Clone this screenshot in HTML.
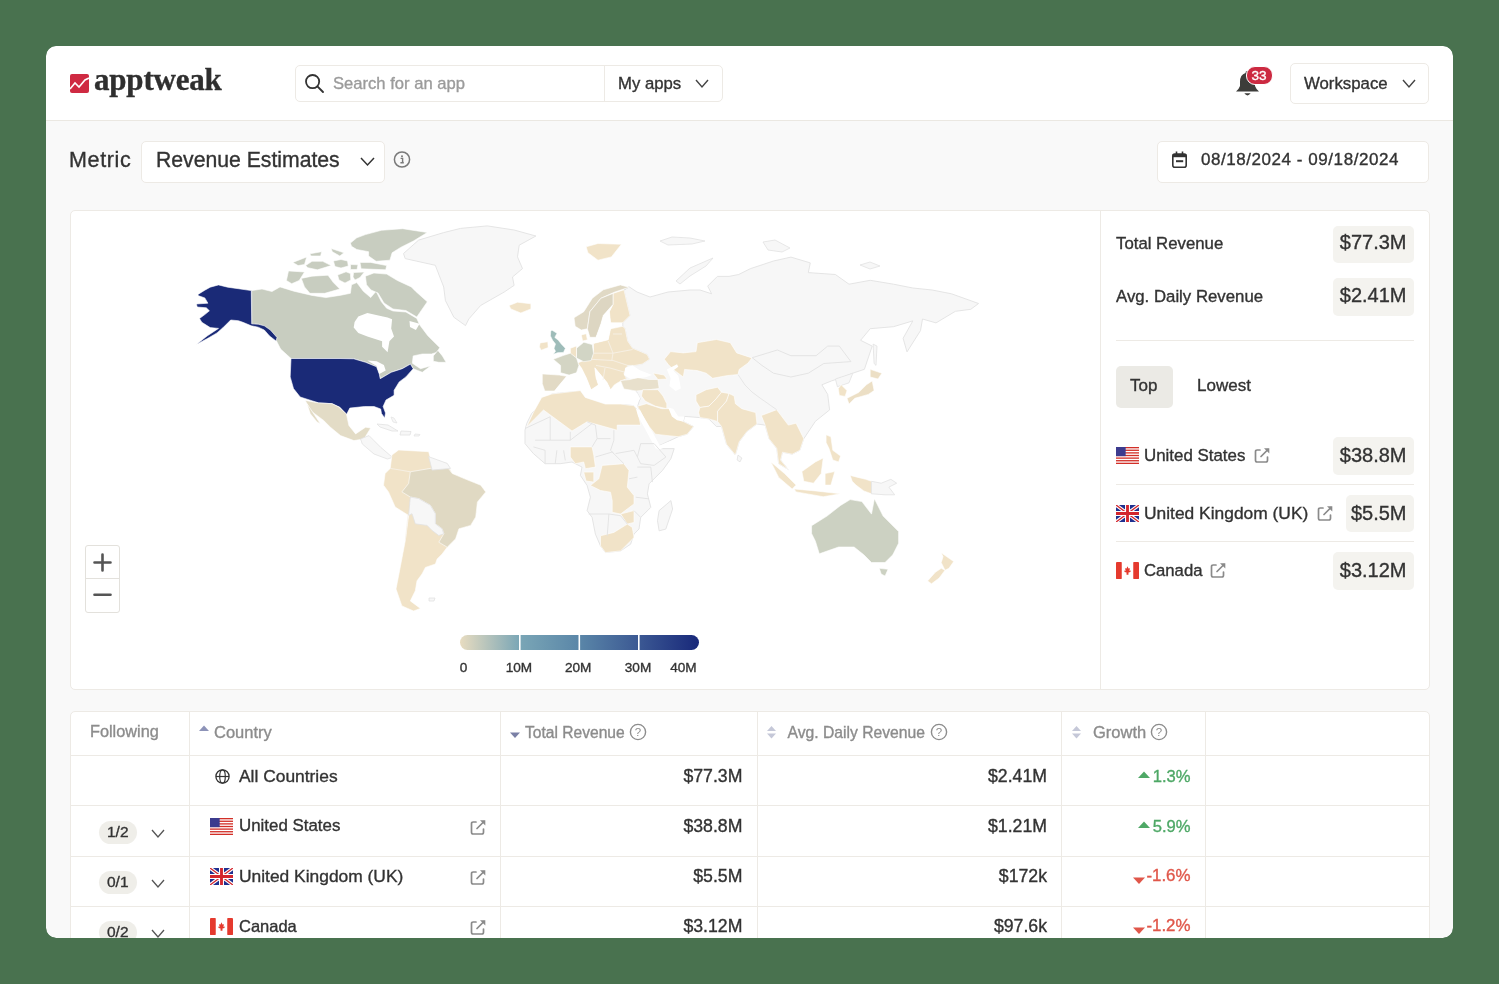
<!DOCTYPE html>
<html><head><meta charset="utf-8"><style>
html,body{margin:0;padding:0;-webkit-font-smoothing:antialiased;width:1499px;height:984px;overflow:hidden;background:#49724f;font-family:"Liberation Sans",sans-serif;}
#wrap{position:absolute;left:0;top:0;width:1499px;height:984px;}
#clip{position:absolute;left:46px;top:46px;width:1407px;height:892px;overflow:hidden;border-radius:10px;}
#inner{position:absolute;left:-46px;top:-46px;width:1499px;height:984px;will-change:transform;}
#inner div{-webkit-text-stroke:0.35px currentColor;}
</style></head><body><div id="wrap"><div id="clip"><div id="inner">
<div style="position:absolute;left:46px;top:46px;width:1407px;height:892px;box-sizing:border-box;background:#f9f9f9;border-radius:10px;"></div>
<div style="position:absolute;left:46px;top:46px;width:1407px;height:75px;box-sizing:border-box;background:#fff;border-bottom:1px solid #ebe8e2;border-radius:10px 10px 0 0;"></div>
<svg style="position:absolute;left:70px;top:74px" width="19" height="19" viewBox="0 0 19 19"><rect width="19" height="19" rx="2" fill="#cf2a42"/><polyline points="0,15 5,9 9,13 15,6 19,4" fill="none" stroke="#fff" stroke-width="1.6"/></svg>
<div style="position:absolute;left:94px;top:62.03px;font-size:31px;line-height:35.65px;color:#2f2f2f;font-weight:bold;letter-spacing:-0.2px;white-space:nowrap;font-family:'Liberation Serif',serif;">apptweak</div>
<div style="position:absolute;left:295px;top:65px;width:428px;height:37px;box-sizing:border-box;background:#fff;border:1px solid #edeae5;border-radius:5px;"></div>
<div style="position:absolute;left:604px;top:66px;width:1px;height:35px;box-sizing:border-box;background:#edeae5;"></div>
<svg style="position:absolute;left:304px;top:73px" width="21" height="21" viewBox="0 0 21 21"><circle cx="8.6" cy="8.6" r="6.6" fill="none" stroke="#333" stroke-width="1.8"/><path d="M13.4 13.4 L19 19" stroke="#333" stroke-width="1.9" stroke-linecap="round"/></svg>
<div style="position:absolute;left:333px;top:73.70px;font-size:16.6px;line-height:19.09px;color:#9b9b9b;font-weight:normal;letter-spacing:0px;white-space:nowrap;">Search for an app</div>
<div style="position:absolute;left:618px;top:73.61px;font-size:16.7px;line-height:19.20px;color:#333;font-weight:normal;letter-spacing:0px;white-space:nowrap;">My apps</div>
<svg style="position:absolute;left:694px;top:78px" width="16" height="11"><polyline points="2,2 8.0,9 14,2" fill="none" stroke="#444" stroke-width="1.4"/></svg>
<svg style="position:absolute;left:1235px;top:69px" width="26" height="29" viewBox="0 0 26 29"><path d="M12 2 Q13.5 2 13.5 4 Q20 5.5 20 13 L20 17 Q21 20 24 22.5 L1 22.5 Q4 20 5 17 L5 13 Q5 5.5 10.5 4 Q10.5 2 12 2 Z" fill="#3d3d3a"/><path d="M9.3 24.3 Q12.5 28.5 15.7 24.3 Z" fill="#3d3d3a"/></svg>
<div style="position:absolute;left:1246px;top:66px;width:27px;height:19px;box-sizing:border-box;background:#cc2a41;border-radius:9px;border:1.5px solid #fff;"></div>
<div style="position:absolute;left:1251.5px;top:68.17px;font-size:13.6px;line-height:15.64px;color:#fff;font-weight:normal;letter-spacing:0px;white-space:nowrap;">33</div>
<div style="position:absolute;left:1290px;top:63px;width:139px;height:41px;box-sizing:border-box;background:#fff;border:1px solid #edeae5;border-radius:5px;"></div>
<div style="position:absolute;left:1304px;top:73.52px;font-size:16.8px;line-height:19.32px;color:#333;font-weight:normal;letter-spacing:0px;white-space:nowrap;">Workspace</div>
<svg style="position:absolute;left:1401px;top:78px" width="16" height="11"><polyline points="2,2 8.0,9 14,2" fill="none" stroke="#444" stroke-width="1.4"/></svg>
<div style="position:absolute;left:69px;top:147.79px;font-size:21.5px;line-height:24.72px;color:#333;font-weight:normal;letter-spacing:0.65px;white-space:nowrap;">Metric</div>
<div style="position:absolute;left:141px;top:141px;width:244px;height:42px;box-sizing:border-box;background:#fff;border:1px solid #edeae5;border-radius:5px;"></div>
<div style="position:absolute;left:156px;top:148.06px;font-size:21.2px;line-height:24.38px;color:#333;font-weight:normal;letter-spacing:0px;white-space:nowrap;">Revenue Estimates</div>
<svg style="position:absolute;left:359px;top:156px" width="17" height="11"><polyline points="2,2 8.5,9 15,2" fill="none" stroke="#333" stroke-width="1.5"/></svg>
<svg style="position:absolute;left:393px;top:151px" width="18" height="18" viewBox="0 0 18 18"><circle cx="9" cy="8.5" r="7.6" fill="none" stroke="#7a7a7a" stroke-width="1.5"/><circle cx="9" cy="5.2" r="1" fill="#7a7a7a"/><path d="M7.6 7.4 H9.6 V11.5 H10.6 M7.4 11.8 H10.8" stroke="#7a7a7a" stroke-width="1.4" fill="none"/></svg>
<div style="position:absolute;left:1157px;top:141px;width:272px;height:42px;box-sizing:border-box;background:#fff;border:1px solid #edeae5;border-radius:5px;"></div>
<svg style="position:absolute;left:1171px;top:150px" width="17" height="19" viewBox="0 0 17 19"><rect x="1.8" y="4" width="13.4" height="13.2" rx="2" fill="none" stroke="#333" stroke-width="1.6"/><rect x="1.8" y="4" width="13.4" height="3.2" fill="#333"/><path d="M5.5 1.5 V5 M11.5 1.5 V5" stroke="#333" stroke-width="1.6"/><rect x="5" y="10.2" width="7.2" height="2" fill="#333"/></svg>
<div style="position:absolute;left:1201px;top:150.03px;font-size:17px;line-height:19.55px;color:#333;font-weight:normal;letter-spacing:0.55px;white-space:nowrap;">08/18/2024 - 09/18/2024</div>
<div style="position:absolute;left:70px;top:210px;width:1360px;height:480px;box-sizing:border-box;background:#fff;border:1px solid #edeae5;border-radius:5px;"></div>
<div style="position:absolute;left:1100px;top:211px;width:1px;height:478px;box-sizing:border-box;background:#edeae5;"></div>
<svg style="position:absolute;left:0;top:0" width="1499" height="984" viewBox="0 0 1499 984"><polygon points="403.5,253.5 418.6,240.1 443.7,232.6 460.5,228.4 487.3,225.9 514.1,230.0 535.9,236.0 519.2,245.2 517.5,256.9 522.5,268.6 512.5,277.0 514.1,285.4 504.1,292.1 480.6,305.5 468.9,318.9 465.5,325.6 453.8,317.2 445.4,300.5 443.7,287.0 435.3,265.3 405.2,258.6" fill="#f7f7f7" stroke="#e2e2e2" stroke-width="0.9" stroke-linejoin="round"/>
<polygon points="251.7,290.6 262.0,289.0 272.0,291.5 280.0,286.9 293.9,291.2 312.0,295.4 325.9,297.6 339.8,295.4 350.4,293.3 351.5,284.8 356.8,282.6 363.3,291.2 370.7,297.6 376.1,291.2 381.4,301.8 386.7,308.3 393.0,311.0 405.9,312.0 416.8,318.4 419.6,324.8 427.8,335.7 435.1,343.0 439.7,347.6 437.0,352.2 431.5,354.0 422.3,354.0 413.2,355.9 412.3,363.2 420.5,368.7 430.5,365.9 429.6,366.8 422.3,372.3 417.7,370.5 413.2,368.7 410.4,364.1 402.2,368.7 391.2,372.3 380.2,378.7 379.3,374.1 376.6,366.8 365.6,362.3 353.7,358.8 340.0,358.5 291.0,358.5 280.6,349.1 276.5,341.0 269.6,336.0 264.3,330.0 258.2,327.2 251.7,325.0" fill="#c8cdc0" stroke="#ffffff" stroke-width="0.6" stroke-linejoin="round"/>
<polygon points="354.6,322.0 358.3,316.5 367.4,312.9 378.4,315.6 387.6,317.4 392.1,319.3 391.2,328.4 394.0,336.6 389.4,341.2 387.6,352.2 382.1,346.7 382.1,341.2 367.4,336.6 358.3,333.0 353.7,327.5" fill="#ffffff"/>
<polygon points="409.5,321.1 419.6,323.8 415.9,330.0 410.0,327.0" fill="#ffffff"/>
<polygon points="433.3,355.9 437.9,350.4 442.4,355.9 446.1,362.3 438.8,362.3 433.3,361.3" fill="#c8cdc0" stroke="#ffffff" stroke-width="0.6" stroke-linejoin="round"/>
<polygon points="350.4,243.1 356.8,237.8 365.4,234.6 381.4,230.3 402.7,228.7 427.3,232.5 413.4,241.0 400.6,247.4 392.1,252.8 389.9,260.2 376.1,261.3 368.6,256.0 368.6,251.7 356.8,249.5 351.5,246.3" fill="#c8cdc0" stroke="#ffffff" stroke-width="0.6" stroke-linejoin="round"/>
<polygon points="360.0,262.4 370.7,262.4 386.7,265.6 385.7,269.8 361.1,268.8" fill="#c8cdc0" stroke="#ffffff" stroke-width="0.6" stroke-linejoin="round"/>
<polygon points="331.2,248.5 344.0,252.8 339.8,256.0 332.3,251.7" fill="#c8cdc0" stroke="#ffffff" stroke-width="0.6" stroke-linejoin="round"/>
<polygon points="309.9,253.8 321.6,251.7 320.6,256.0 311.0,256.0" fill="#c8cdc0" stroke="#ffffff" stroke-width="0.6" stroke-linejoin="round"/>
<polygon points="292.8,262.4 306.7,257.0 304.5,264.5 298.1,265.6" fill="#c8cdc0" stroke="#ffffff" stroke-width="0.6" stroke-linejoin="round"/>
<polygon points="305.6,265.6 312.0,261.3 322.7,261.3 331.2,265.6 317.4,269.8 307.8,267.7" fill="#c8cdc0" stroke="#ffffff" stroke-width="0.6" stroke-linejoin="round"/>
<polygon points="333.4,261.0 341.0,259.5 347.5,261.0 348.3,266.0 341.0,268.0 335.0,266.5" fill="#c8cdc0" stroke="#ffffff" stroke-width="0.6" stroke-linejoin="round"/>
<polygon points="350.5,264.5 358.0,264.8 357.0,269.5 350.5,269.5" fill="#c8cdc0" stroke="#ffffff" stroke-width="0.6" stroke-linejoin="round"/>
<polygon points="288.5,270.9 304.5,272.0 299.2,280.5 291.7,283.7 286.4,280.5" fill="#c8cdc0" stroke="#ffffff" stroke-width="0.6" stroke-linejoin="round"/>
<polygon points="301.3,278.4 312.0,276.2 328.0,275.2 333.4,282.6 339.8,289.0 324.8,293.3 309.9,293.3 304.5,286.9" fill="#c8cdc0" stroke="#ffffff" stroke-width="0.6" stroke-linejoin="round"/>
<polygon points="337.6,275.0 346.0,271.8 350.4,273.5 350.8,280.0 345.0,283.0 339.0,280.0" fill="#c8cdc0" stroke="#ffffff" stroke-width="0.6" stroke-linejoin="round"/>
<polygon points="353.6,272.5 364.3,272.0 360.0,277.5 355.0,280.0 353.0,277.0" fill="#c8cdc0" stroke="#ffffff" stroke-width="0.6" stroke-linejoin="round"/>
<polygon points="365.4,276.2 373.9,273.0 386.7,274.1 397.4,280.5 411.3,286.9 415.5,291.2 427.3,301.8 419.6,312.9 416.8,317.0 405.9,310.5 393.0,309.0 384.0,303.0 378.0,293.0 371.0,290.0 366.5,284.8" fill="#c8cdc0" stroke="#ffffff" stroke-width="0.6" stroke-linejoin="round"/>
<polygon points="198.0,294.4 204.8,290.2 210.2,287.2 218.5,284.9 227.7,287.2 238.4,288.7 251.3,290.6 251.7,323.8 258.2,324.2 264.3,325.8 270.4,330.0 277.0,337.5 276.0,341.0 269.6,336.0 264.3,330.0 258.2,327.2 251.3,325.8 242.9,322.3 238.4,320.7 230.7,320.0 223.1,327.6 217.0,332.9 207.9,338.3 196.4,344.4 207.1,336.0 218.5,328.4 210.2,327.6 201.8,322.3 199.5,318.5 204.8,314.6 209.4,310.8 206.3,307.8 197.2,307.0 196.4,304.0 207.9,303.2 204.8,297.9 198.0,295.6" fill="#1a2a77" stroke="#ffffff" stroke-width="0.6" stroke-linejoin="round"/>
<polygon points="291.0,358.5 340.0,358.5 353.7,358.8 365.6,362.3 376.6,366.8 379.3,374.1 380.2,378.7 391.2,372.3 402.2,368.7 410.4,364.1 413.2,368.7 405.9,376.9 399.2,381.9 394.1,390.3 394.1,395.3 386.0,400.0 383.1,406.5 385.5,413.0 384.7,417.9 381.5,413.5 380.7,409.0 374.1,406.5 364.4,406.5 349.8,408.1 346.5,414.6 340.0,407.3 332.1,403.7 318.7,402.9 300.2,397.0 293.5,388.6 290.2,376.9" fill="#1a2a77" stroke="#ffffff" stroke-width="0.6" stroke-linejoin="round"/>
<polygon points="367.4,360.4 376.6,361.3 383.9,365.0 385.7,370.5 379.3,374.1 376.6,365.9" fill="#ffffff"/>
<polygon points="305.3,400.4 318.7,402.9 332.1,403.7 338.8,407.1 346.4,413.8 348.9,425.5 355.6,433.9 365.6,427.2 370.7,428.0 364.0,438.9 353.9,440.6 340.5,435.6 330.4,427.2 323.7,420.5 310.3,410.4" fill="#e3dcc6" stroke="#ffffff" stroke-width="0.6" stroke-linejoin="round"/>
<polygon points="307.0,403.7 320.4,423.8 317.0,422.0 310.3,413.8" fill="#e3dcc6" stroke="#ffffff" stroke-width="0.6" stroke-linejoin="round"/>
<polygon points="360.6,438.9 369.0,435.6 380.7,447.3 392.5,457.4 387.4,459.0 374.0,454.0 362.3,444.0" fill="#f7f7f7" stroke="#e2e2e2" stroke-width="0.8" stroke-linejoin="round"/>
<polygon points="377.0,424.0 388.0,425.0 398.0,431.0 392.0,431.0 380.0,427.0" fill="#f7f7f7" stroke="#e2e2e2" stroke-width="0.8" stroke-linejoin="round"/>
<polygon points="401.0,431.0 411.0,431.5 410.0,435.0 400.0,435.0" fill="#f7f7f7" stroke="#e2e2e2" stroke-width="0.8" stroke-linejoin="round"/>
<polygon points="391.0,417.0 394.0,418.0 397.0,423.0 393.0,422.0" fill="#f7f7f7" stroke="#e2e2e2" stroke-width="0.7" stroke-linejoin="round"/>
<polygon points="415.0,434.0 420.0,434.5 419.0,436.0 414.0,436.0" fill="#f7f7f7" stroke="#e2e2e2" stroke-width="0.7" stroke-linejoin="round"/>
<polygon points="391.9,455.0 398.6,450.0 428.7,451.7 430.4,458.4 447.2,463.4 452.2,473.5 464.0,478.5 480.7,485.2 485.7,491.9 477.4,502.0 475.7,517.0 470.6,525.4 458.9,528.8 455.6,538.8 447.2,547.2 442.1,554.0 437.1,559.0 435.4,564.0 425.4,567.4 422.0,574.0 417.0,580.8 415.3,590.8 410.3,600.9 420.4,608.4 413.6,611.0 401.9,605.9 396.0,589.0 400.2,567.4 405.3,540.5 408.6,515.4 395.2,507.0 388.5,491.9 383.5,485.2 385.1,473.5 390.2,468.4" fill="#f1e3c8" stroke="#ffffff" stroke-width="0.6" stroke-linejoin="round"/>
<polygon points="410.3,471.8 430.4,468.4 447.2,466.8 452.2,473.5 464.0,478.5 480.7,485.2 485.7,491.9 477.4,502.0 475.7,517.0 470.6,525.4 458.9,528.8 455.6,538.8 447.2,547.2 438.8,542.2 443.8,533.8 442.1,528.8 435.4,523.8 435.4,513.7 430.4,505.3 418.7,498.6 410.3,497.0 401.9,491.9 408.6,483.5" fill="#e0d9c3" stroke="#ffffff" stroke-width="0.6" stroke-linejoin="round"/>
<polygon points="410.3,497.0 418.7,498.6 430.4,505.3 435.4,513.7 435.4,523.8 442.1,528.8 443.8,533.8 438.8,535.5 432.1,530.5 427.1,525.4 415.3,523.8 412.0,513.7 408.6,515.4" fill="#f7f7f7" stroke="#e2e2e2" stroke-width="0.8" stroke-linejoin="round"/>
<polygon points="428.7,456.7 447.2,463.4 450.5,468.4 432.1,470.1" fill="#f7f7f7" stroke="#e2e2e2" stroke-width="0.8" stroke-linejoin="round"/>
<polygon points="429.0,598.0 435.0,598.0 434.0,601.0 429.0,601.0" fill="#f7f7f7" stroke="#e2e2e2" stroke-width="0.8" stroke-linejoin="round"/>
<polygon points="526.7,423.5 531.7,413.4 541.8,403.4 551.8,394.0 580.3,390.6 585.3,397.4 605.4,404.1 620.5,404.1 633.9,405.7 637.4,410.0 644.0,423.5 654.1,440.2 657.5,448.6 674.2,448.6 670.9,458.7 662.5,470.4 649.1,483.8 647.4,493.9 650.8,507.3 640.7,517.4 639.0,529.0 634.0,534.1 630.6,544.2 620.6,550.9 605.5,552.6 600.5,545.9 595.4,534.1 592.1,517.4 587.1,510.6 590.4,497.2 587.1,485.5 580.4,475.4 582.0,467.1 572.0,462.0 560.2,463.7 545.1,463.7 533.4,453.6 525.0,443.6 525.0,430.2" fill="#f7f7f7" stroke="#e2e2e2" stroke-width="0.9" stroke-linejoin="round"/>
<polygon points="526.7,426.8 535.1,418.4 543.5,410.0 572.0,431.0 587.1,421.8 617.2,430.2 617.2,425.1 640.7,425.1 637.4,410.0 633.9,405.7 620.5,404.1 605.4,404.1 585.3,397.4 580.3,390.6 551.8,394.0 541.7,397.4 533.4,412.4" fill="#f1e3c8" stroke="#ffffff" stroke-width="0.6" stroke-linejoin="round"/>
<polygon points="570.3,446.9 592.1,446.9 593.8,455.3 595.4,467.1 585.4,468.7 583.7,462.0 575.3,463.7 570.3,457.0" fill="#f1e3c8" stroke="#ffffff" stroke-width="0.6" stroke-linejoin="round"/>
<polygon points="583.7,472.1 593.8,472.1 593.8,482.1 586.0,481.0" fill="#f1e3c8" stroke="#ffffff" stroke-width="0.6" stroke-linejoin="round"/>
<polygon points="602.1,465.4 623.9,463.7 629.0,470.4 627.3,487.2 634.0,495.6 634.0,503.9 620.6,514.0 612.2,512.3 612.2,500.6 610.5,492.2 600.5,490.5 590.4,485.5 598.8,478.8" fill="#f1e3c8" stroke="#ffffff" stroke-width="0.6" stroke-linejoin="round"/>
<polygon points="620.6,514.0 634.0,510.6 634.0,522.4 627.3,524.1" fill="#f1e3c8" stroke="#ffffff" stroke-width="0.6" stroke-linejoin="round"/>
<polygon points="600.5,535.8 613.9,532.4 627.3,524.1 632.3,527.4 634.0,537.5 620.6,550.9 605.5,552.6 600.5,545.9" fill="#f1e3c8" stroke="#ffffff" stroke-width="0.6" stroke-linejoin="round"/>
<polygon points="670.9,500.6 672.6,509.0 665.8,529.1 659.1,530.8 657.5,520.7 659.1,510.6" fill="#f7f7f7" stroke="#e2e2e2" stroke-width="0.9" stroke-linejoin="round"/>
<polygon points="623.9,290.0 628.9,286.7 637.0,292.0 650.0,297.0 668.0,292.0 690.0,290.0 700.0,290.0 711.6,293.8 707.7,286.1 717.4,276.4 729.0,276.4 738.7,274.5 750.3,268.7 773.5,261.0 790.9,257.1 810.3,262.9 808.3,272.6 835.4,274.5 849.0,284.2 870.2,280.3 893.5,284.2 912.8,288.0 932.2,290.0 951.5,293.8 978.6,303.5 970.8,309.3 955.4,311.3 936.0,322.9 922.5,319.0 920.5,330.6 907.0,351.9 903.1,338.3 912.8,320.9 893.5,326.7 870.2,328.7 860.6,340.3 872.2,346.1 864.4,369.3 852.8,373.2 843.2,377.0 831.6,380.9 821.9,384.8 827.7,394.4 829.6,409.9 815.4,421.3 803.8,438.7 799.9,450.3 792.2,454.2 782.5,452.2 780.6,460.0 788.3,469.6 778.7,463.8 776.7,448.4 769.0,438.7 765.1,425.1 757.0,424.0 746.9,431.6 739.2,441.8 735.4,455.0 726.5,444.3 721.5,426.5 716.4,426.5 708.8,418.9 699.9,417.6 684.6,416.4 683.3,421.5 693.5,426.5 687.2,434.2 678.3,436.7 656.7,446.9 649.1,426.5 641.4,413.8 637.6,406.2 640.2,398.6 637.6,393.5 636.4,391.0 622.8,387.3 622.8,381.2 626.5,378.8 624.0,373.9 627.7,365.4 635.0,365.4 642.3,364.1 649.6,359.3 647.2,354.4 638.7,350.7 632.6,348.3 627.7,341.0 625.2,328.8 622.8,326.3 622.8,322.7 630.1,315.4 626.5,300.7 624.0,289.8 628.9,287.3" fill="#f7f7f7" stroke="#e2e2e2" stroke-width="0.9" stroke-linejoin="round"/>
<polygon points="608.2,339.8 610.6,328.8 622.8,326.3 625.2,328.8 627.7,341.0 632.6,348.3 638.7,350.7 647.2,354.4 649.6,359.3 642.3,364.1 635.0,365.4 627.7,365.4 624.0,373.9 626.5,378.8 620.4,381.2 614.3,384.9 610.6,389.8 607.0,382.4 600.9,375.1 594.8,367.8 596.0,377.6 598.4,384.9 591.1,389.8 586.2,377.6 581.3,367.8 577.7,362.9 583.8,360.5 591.1,359.3 593.5,350.7 593.5,343.4" fill="#f1e3c8" stroke="#ffffff" stroke-width="0.6" stroke-linejoin="round"/>
<polygon points="613.0,293.4 624.0,289.8 626.5,300.7 630.1,315.4 622.8,322.7 610.6,322.7 609.4,311.7 613.0,304.4" fill="#f1e3c8" stroke="#ffffff" stroke-width="0.6" stroke-linejoin="round"/>
<polygon points="574.0,317.8 583.8,311.7 592.3,298.3 603.3,289.8 620.4,284.9 628.9,287.3 614.3,292.2 600.9,298.3 589.9,311.7 587.4,328.8 581.3,330.0 575.2,326.3" fill="#e0d9c5" stroke="#ffffff" stroke-width="0.6" stroke-linejoin="round"/>
<polygon points="589.9,311.7 600.9,298.3 613.0,293.4 613.0,304.4 603.3,315.4 600.9,323.9 596.0,337.3 589.9,337.3 587.4,328.8" fill="#ddd6c2" stroke="#ffffff" stroke-width="0.6" stroke-linejoin="round"/>
<polygon points="581.3,334.9 586.2,333.7 587.4,339.8 582.6,341.0" fill="#f1e3c8" stroke="#ffffff" stroke-width="0.6" stroke-linejoin="round"/>
<polygon points="576.5,348.3 583.8,342.2 592.3,344.6 593.5,353.2 591.1,360.5 583.8,361.7 576.5,358.0" fill="#d2d5c5" stroke="#ffffff" stroke-width="0.6" stroke-linejoin="round"/>
<polygon points="570.4,348.3 576.5,345.9 576.5,358.0 570.4,354.4" fill="#f1e3c8" stroke="#ffffff" stroke-width="0.6" stroke-linejoin="round"/>
<polygon points="553.3,359.3 563.0,355.6 570.4,353.2 576.5,358.0 578.9,365.4 576.5,372.7 569.1,375.1 560.6,372.7 560.6,365.4" fill="#d4d5c4" stroke="#ffffff" stroke-width="0.6" stroke-linejoin="round"/>
<polygon points="542.3,373.9 559.4,375.1 566.7,376.3 559.4,384.9 554.5,391.0 544.8,391.0 542.3,383.7" fill="#e2dac5" stroke="#ffffff" stroke-width="0.6" stroke-linejoin="round"/>
<polygon points="551.8,330.0 557.0,333.3 554.8,337.4 558.4,340.3 561.3,344.0 565.4,348.3 563.5,352.4 557.7,352.7 553.3,354.2 555.5,351.3 554.0,348.3 555.5,344.0 552.6,340.3 550.4,335.9 550.7,331.5" fill="#9ebcb9" stroke="#ffffff" stroke-width="0.6" stroke-linejoin="round"/>
<polygon points="540.1,342.9 547.8,341.8 548.2,347.6 541.2,350.2 539.4,346.9" fill="#f1e3c8" stroke="#ffffff" stroke-width="0.6" stroke-linejoin="round"/>
<polygon points="509.1,305.5 517.5,302.2 530.9,303.8 530.9,308.9 520.8,313.0 510.8,308.9" fill="#f1e3c8" stroke="#ffffff" stroke-width="0.6" stroke-linejoin="round"/>
<polygon points="586.2,246.8 598.0,243.5 621.4,244.3 611.4,256.9 598.0,260.2 587.9,252.7" fill="#f1e3c8" stroke="#ffffff" stroke-width="0.6" stroke-linejoin="round"/>
<polygon points="566.7,376.3 576.5,372.7 581.3,367.8 586.2,377.6 591.1,389.8 598.4,384.9 596.0,377.6 594.8,367.8 600.9,375.1 607.0,382.4 610.6,389.8 618.0,382.4 624.0,387.3 630.0,392.2 637.6,393.5 640.2,398.6 636.4,403.7 620.5,404.1 605.4,404.1 585.3,397.4 580.3,390.6 559.4,392.2 554.5,391.0 559.4,384.9" fill="#ffffff"/>
<polygon points="613.0,304.4 609.4,311.7 610.6,322.7 622.8,323.9 610.6,328.8 608.2,339.8 593.5,343.4 596.0,337.3 600.9,323.9 603.3,315.4" fill="#ffffff"/>
<polygon points="620.5,380.6 630.0,379.5 637.6,377.6 649.1,379.5 657.9,379.5 659.2,388.4 649.1,389.7 636.4,391.0 623.9,389.0" fill="#e8e0cc" stroke="#ffffff" stroke-width="0.6" stroke-linejoin="round"/>
<polygon points="625.2,367.8 632.6,365.4 639.9,370.2 652.1,375.1 644.8,377.6 630.1,378.8 624.0,375.1" fill="#ffffff"/>
<polygon points="652.9,373.0 664.0,375.0 667.0,379.0 657.9,379.5" fill="#f1e3c8" stroke="#ffffff" stroke-width="0.6" stroke-linejoin="round"/>
<polygon points="664.3,359.2 670.6,351.6 683.3,352.9 696.0,351.6 697.3,342.7 716.4,339.5 730.3,342.7 736.7,352.9 751.9,357.9 748.1,363.0 739.2,369.4 738.0,374.5 726.5,375.7 712.6,378.3 706.2,373.2 697.3,370.6 684.6,369.4 683.3,377.0 673.2,369.4 668.1,364.3" fill="#f1e3c8" stroke="#ffffff" stroke-width="0.6" stroke-linejoin="round"/>
<polygon points="666.8,369.4 677.0,364.3 678.3,366.8 673.2,370.6 678.3,375.7 679.5,380.8 680.8,388.4 675.7,391.0 669.4,385.9 670.6,378.3" fill="#ffffff"/>
<polygon points="642.7,389.7 657.9,389.7 663.0,396.0 666.8,403.7 666.8,408.7 655.4,406.2 645.2,401.1 641.4,396.0" fill="#f1e3c8" stroke="#ffffff" stroke-width="0.6" stroke-linejoin="round"/>
<polygon points="637.6,406.2 646.5,403.7 661.8,408.7 669.4,408.7 674.5,417.6 683.3,421.5 693.5,426.5 687.2,434.2 678.3,436.7 665.6,435.4 655.4,434.2 649.1,426.5 641.4,413.8" fill="#f0e2c6" stroke="#ffffff" stroke-width="0.6" stroke-linejoin="round"/>
<polygon points="636.0,409.0 640.0,410.0 646.0,421.0 653.0,433.0 660.0,446.0 656.0,449.0 651.0,440.0 644.0,427.0 638.0,416.0" fill="#ffffff"/>
<polygon points="656.0,447.0 668.0,442.0 677.0,439.0 676.0,443.0 666.0,447.0 658.0,450.0" fill="#ffffff"/>
<polygon points="668.1,407.5 673.2,408.7 678.3,416.4 684.6,416.4 683.3,421.5 677.0,420.2 671.9,416.4" fill="#ffffff"/>
<polygon points="696.0,394.8 706.2,389.7 717.6,387.2 721.5,392.2 716.4,398.6 708.8,406.2 699.9,407.5 696.0,401.1" fill="#f1e3c8" stroke="#ffffff" stroke-width="0.6" stroke-linejoin="round"/>
<polygon points="699.9,407.5 708.8,406.2 716.4,398.6 721.5,392.2 729.1,393.5 726.5,401.1 717.6,411.3 717.6,421.5 708.8,418.9 699.9,417.6 698.6,412.6" fill="#f1e3c8" stroke="#ffffff" stroke-width="0.6" stroke-linejoin="round"/>
<polygon points="726.5,401.1 729.1,393.5 734.2,396.0 735.4,403.7 741.8,408.7 755.7,412.6 757.0,424.0 746.9,431.6 739.2,441.8 735.4,455.0 726.5,444.3 721.5,426.5 717.6,421.5 717.6,411.3" fill="#f1e3c8" stroke="#ffffff" stroke-width="0.6" stroke-linejoin="round"/>
<polygon points="761.3,415.5 776.7,409.7 788.3,425.1 796.1,423.2 803.8,438.7 799.9,450.3 792.2,454.2 782.5,452.2 780.6,460.0 788.3,469.6 778.7,463.8 776.7,448.4 769.0,438.7 765.1,425.1" fill="#f1e3c8" stroke="#ffffff" stroke-width="0.6" stroke-linejoin="round"/>
<polygon points="835.4,379.0 852.8,373.2 849.0,382.8 843.2,384.8 837.4,386.7" fill="#f7f7f7" stroke="#e2e2e2" stroke-width="0.8" stroke-linejoin="round"/>
<polygon points="841.2,384.8 847.0,390.6 845.1,396.4 839.3,395.4 838.3,388.6" fill="#f1e3c8" stroke="#ffffff" stroke-width="0.6" stroke-linejoin="round"/>
<polygon points="870.2,369.3 881.9,373.2 878.0,379.0 870.2,377.0" fill="#ecdfc5" stroke="#ffffff" stroke-width="0.6" stroke-linejoin="round"/>
<polygon points="872.2,380.9 874.1,390.6 868.3,394.4 854.8,398.3 849.0,404.1 847.0,398.3 858.6,392.5 866.4,384.8" fill="#ecdfc5" stroke="#ffffff" stroke-width="0.6" stroke-linejoin="round"/>
<polygon points="873.1,344.1 877.0,346.1 876.0,365.4 874.1,363.5" fill="#f7f7f7" stroke="#e2e2e2" stroke-width="0.8" stroke-linejoin="round"/>
<polygon points="752.2,357.7 777.4,350.0 790.9,355.7 816.1,355.7 827.7,346.1 839.3,346.1 850.9,361.6 823.8,363.5 808.3,373.2 790.9,377.0 773.5,373.2 761.9,365.4" fill="#f7f7f7" stroke="#e2e2e2" stroke-width="0.9" stroke-linejoin="round"/>
<polygon points="676.0,281.0 690.0,268.0 713.0,258.0 706.0,266.0 690.0,276.0 680.0,284.0" fill="#f7f7f7" stroke="#e2e2e2" stroke-width="0.8" stroke-linejoin="round"/>
<polygon points="660.0,241.0 672.0,237.0 690.0,238.0 705.0,241.0 692.0,244.0 668.0,245.0" fill="#f7f7f7" stroke="#e2e2e2" stroke-width="0.8" stroke-linejoin="round"/>
<polygon points="763.0,242.0 775.0,240.0 790.0,248.0 782.0,252.0 768.0,250.0" fill="#f7f7f7" stroke="#e2e2e2" stroke-width="0.8" stroke-linejoin="round"/>
<polygon points="860.0,265.0 870.0,262.0 880.0,266.0 870.0,269.0" fill="#f7f7f7" stroke="#e2e2e2" stroke-width="0.8" stroke-linejoin="round"/>
<polygon points="738.0,455.1 741.9,458.0 740.0,461.9 737.1,460.0" fill="#f7f7f7" stroke="#e2e2e2" stroke-width="0.8" stroke-linejoin="round"/>
<polygon points="770.9,461.9 784.5,473.5 796.1,485.1 792.2,489.0 778.7,477.4" fill="#f1e3c8" stroke="#ffffff" stroke-width="0.6" stroke-linejoin="round"/>
<polygon points="794.1,489.0 815.4,490.9 840.6,493.8 823.2,496.7 796.1,491.9" fill="#f1e3c8" stroke="#ffffff" stroke-width="0.6" stroke-linejoin="round"/>
<polygon points="801.9,471.6 815.4,461.9 823.2,458.0 821.2,473.5 813.5,483.2 803.8,481.3" fill="#f1e3c8" stroke="#ffffff" stroke-width="0.6" stroke-linejoin="round"/>
<polygon points="825.1,473.5 834.8,471.6 830.9,485.1 825.1,485.1" fill="#f1e3c8" stroke="#ffffff" stroke-width="0.6" stroke-linejoin="round"/>
<polygon points="826.1,434.8 830.9,436.8 832.8,450.3 840.6,456.1 838.6,461.9 832.8,460.0 829.0,448.4 826.1,442.6" fill="#f1e3c8" stroke="#ffffff" stroke-width="0.6" stroke-linejoin="round"/>
<polygon points="850.2,475.4 858.0,477.4 865.7,479.3 871.5,481.3 871.5,493.8 863.8,490.9 856.0,485.1 852.2,481.3" fill="#f1e3c8" stroke="#ffffff" stroke-width="0.6" stroke-linejoin="round"/>
<polygon points="871.5,481.3 881.2,483.2 890.9,479.3 896.7,483.2 888.9,487.1 894.7,494.8 885.0,494.8 871.5,493.8" fill="#f7f7f7" stroke="#e2e2e2" stroke-width="0.8" stroke-linejoin="round"/>
<polygon points="811.6,525.7 827.0,516.1 840.6,505.4 850.2,499.6 861.9,501.6 871.5,514.1 874.4,498.7 883.1,516.1 898.6,531.6 898.6,543.2 892.8,554.8 885.0,562.5 871.5,562.5 863.8,554.8 854.1,547.0 838.6,547.0 819.3,553.8 815.4,541.2 811.6,533.5" fill="#ccd1c2" stroke="#ffffff" stroke-width="0.6" stroke-linejoin="round"/>
<polygon points="879.3,568.3 888.0,569.3 885.1,576.0 881.2,574.1" fill="#ccd1c2" stroke="#ffffff" stroke-width="0.6" stroke-linejoin="round"/>
<polygon points="941.2,552.8 953.7,561.5 948.9,568.3 945.0,570.2 941.2,562.5 943.1,556.7" fill="#f1e3c8" stroke="#ffffff" stroke-width="0.6" stroke-linejoin="round"/>
<polygon points="945.0,570.2 939.2,578.0 931.5,583.8 927.6,580.9 935.4,572.2 941.2,568.3" fill="#f1e3c8" stroke="#ffffff" stroke-width="0.6" stroke-linejoin="round"/>
<polyline points="525.0,428.5 550.2,416.8 550.2,440.2 535.1,440.2" fill="none" stroke="#e2e2e2" stroke-width="0.9" stroke-linejoin="round"/>
<polyline points="550.2,440.2 570.3,440.2 570.3,431.9" fill="none" stroke="#e2e2e2" stroke-width="0.9" stroke-linejoin="round"/>
<polyline points="570.3,440.2 592.1,423.5" fill="none" stroke="#e2e2e2" stroke-width="0.9" stroke-linejoin="round"/>
<polyline points="587.1,421.8 595.4,425.1 597.1,438.6 592.1,446.9" fill="none" stroke="#e2e2e2" stroke-width="0.9" stroke-linejoin="round"/>
<polyline points="613.9,430.2 613.9,440.2 610.5,450.3 613.9,453.6" fill="none" stroke="#e2e2e2" stroke-width="0.9" stroke-linejoin="round"/>
<polyline points="615.6,453.6 634.0,450.3 637.4,457.0" fill="none" stroke="#e2e2e2" stroke-width="0.9" stroke-linejoin="round"/>
<polyline points="637.4,457.0 640.7,443.6 654.1,443.6 665.9,457.0 654.1,465.4 640.7,463.7 637.4,457.0" fill="none" stroke="#e2e2e2" stroke-width="0.9" stroke-linejoin="round"/>
<polyline points="595.4,457.0 612.2,452.0 623.9,463.7" fill="none" stroke="#e2e2e2" stroke-width="0.9" stroke-linejoin="round"/>
<polyline points="637.4,467.1 650.8,467.1 652.4,482.1" fill="none" stroke="#e2e2e2" stroke-width="0.9" stroke-linejoin="round"/>
<polyline points="637.4,477.1 629.0,478.8" fill="none" stroke="#e2e2e2" stroke-width="0.9" stroke-linejoin="round"/>
<polyline points="635.7,497.2 649.1,498.9" fill="none" stroke="#e2e2e2" stroke-width="0.9" stroke-linejoin="round"/>
<polyline points="588.7,514.0 608.9,514.0 607.2,535.8" fill="none" stroke="#e2e2e2" stroke-width="0.9" stroke-linejoin="round"/>
<polyline points="608.9,514.0 620.6,515.7 627.3,524.1" fill="none" stroke="#e2e2e2" stroke-width="0.9" stroke-linejoin="round"/>
<polyline points="634.0,510.6 640.7,517.4" fill="none" stroke="#e2e2e2" stroke-width="0.9" stroke-linejoin="round"/>
<polyline points="533.4,446.9 545.1,450.3 545.1,463.7" fill="none" stroke="#e2e2e2" stroke-width="0.9" stroke-linejoin="round"/>
<polyline points="556.9,450.3 555.2,463.7" fill="none" stroke="#e2e2e2" stroke-width="0.9" stroke-linejoin="round"/>
<polyline points="563.6,450.3 565.3,460.4" fill="none" stroke="#e2e2e2" stroke-width="0.9" stroke-linejoin="round"/>
<polyline points="597.1,438.6 610.5,438.6" fill="none" stroke="#e2e2e2" stroke-width="0.9" stroke-linejoin="round"/>
<polyline points="608.2,341.0 613.0,353.2 611.8,360.5" fill="none" stroke="#f7f3ea" stroke-width="0.8" stroke-linejoin="round"/>
<polyline points="593.5,353.2 613.0,353.2 632.6,349.5" fill="none" stroke="#f7f3ea" stroke-width="0.8" stroke-linejoin="round"/>
<polyline points="591.1,359.3 613.0,360.5 627.7,365.4" fill="none" stroke="#f7f3ea" stroke-width="0.8" stroke-linejoin="round"/>
<polyline points="596.0,365.4 610.0,368.0 624.0,372.0" fill="none" stroke="#f7f3ea" stroke-width="0.8" stroke-linejoin="round"/>
<polyline points="605.0,368.0 603.0,380.0" fill="none" stroke="#f7f3ea" stroke-width="0.8" stroke-linejoin="round"/>
<polyline points="613.0,334.0 622.0,334.0" fill="none" stroke="#f7f3ea" stroke-width="0.8" stroke-linejoin="round"/>
<polyline points="390.2,468.4 400.0,470.0 410.3,471.8" fill="none" stroke="#f7f3ea" stroke-width="0.8" stroke-linejoin="round"/>
<polyline points="405.3,540.5 408.0,515.0" fill="none" stroke="#f7f3ea" stroke-width="0.8" stroke-linejoin="round"/>
<polyline points="738.0,374.5 745.0,385.0 752.0,392.0 760.0,398.0 776.7,409.7" fill="none" stroke="#e2e2e2" stroke-width="0.8" stroke-linejoin="round"/></svg>
<div style="position:absolute;left:85px;top:545px;width:35px;height:68px;box-sizing:border-box;background:#fff;border:1px solid #e3e1dc;border-radius:3px;"></div>
<div style="position:absolute;left:86px;top:578px;width:33px;height:1px;box-sizing:border-box;background:#e3e1dc;"></div>
<svg style="position:absolute;left:86px;top:546px" width="33" height="66"><path d="M16.5 8.5 V24.5 M8.5 16.5 H24.5" stroke="#555" stroke-width="2.6" stroke-linecap="round"/><path d="M8.5 48.7 H24.5" stroke="#555" stroke-width="2.6" stroke-linecap="round"/></svg>
<svg style="position:absolute;left:459px;top:634px" width="241" height="17"><defs><linearGradient id="lg" x1="0" x2="1"><stop offset="0" stop-color="#e8dcc0"/><stop offset="0.25" stop-color="#7aa6b6"/><stop offset="0.5" stop-color="#5a86a8"/><stop offset="0.75" stop-color="#3b5893"/><stop offset="1" stop-color="#18287a"/></linearGradient></defs><rect x="1" y="1" width="239" height="15" rx="7.5" fill="url(#lg)"/><rect x="60" y="0" width="1.6" height="17" fill="#fff"/><rect x="119.5" y="0" width="1.6" height="17" fill="#fff"/><rect x="179" y="0" width="1.6" height="17" fill="#fff"/></svg>
<div style="position:absolute;left:459.7px;top:660.07px;font-size:13.6px;line-height:15.64px;color:#333;font-weight:normal;letter-spacing:0px;white-space:nowrap;">0</div>
<div style="position:absolute;left:505.7px;top:660.07px;font-size:13.6px;line-height:15.64px;color:#333;font-weight:normal;letter-spacing:0px;white-space:nowrap;">10M</div>
<div style="position:absolute;left:565px;top:660.07px;font-size:13.6px;line-height:15.64px;color:#333;font-weight:normal;letter-spacing:0px;white-space:nowrap;">20M</div>
<div style="position:absolute;left:624.8px;top:660.07px;font-size:13.6px;line-height:15.64px;color:#333;font-weight:normal;letter-spacing:0px;white-space:nowrap;">30M</div>
<div style="position:absolute;left:670.2px;top:660.07px;font-size:13.6px;line-height:15.64px;color:#333;font-weight:normal;letter-spacing:0px;white-space:nowrap;">40M</div>
<div style="position:absolute;left:1116px;top:233.52px;font-size:16.8px;line-height:19.32px;color:#333;font-weight:normal;letter-spacing:0px;white-space:nowrap;">Total Revenue</div>
<div style="position:absolute;left:1333px;top:226px;width:81px;height:37px;box-sizing:border-box;background:#f4f3ef;border-radius:5px;"></div>
<div style="position:absolute;right:92.5px;top:231.27px;font-size:20px;line-height:23.00px;color:#333;font-weight:normal;letter-spacing:0px;white-space:nowrap;text-align:right;">$77.3M</div>
<div style="position:absolute;left:1116px;top:286.52px;font-size:16.8px;line-height:19.32px;color:#333;font-weight:normal;letter-spacing:0px;white-space:nowrap;">Avg. Daily Revenue</div>
<div style="position:absolute;left:1333px;top:278px;width:81px;height:38px;box-sizing:border-box;background:#f4f3ef;border-radius:5px;"></div>
<div style="position:absolute;right:92.5px;top:284.07px;font-size:20px;line-height:23.00px;color:#333;font-weight:normal;letter-spacing:0px;white-space:nowrap;text-align:right;">$2.41M</div>
<div style="position:absolute;left:1116px;top:340px;width:298px;height:1px;box-sizing:border-box;background:#edeae5;"></div>
<div style="position:absolute;left:1116px;top:366px;width:57px;height:42px;box-sizing:border-box;background:#ebeae5;border-radius:5px;"></div>
<div style="position:absolute;left:1130px;top:376.33px;font-size:17px;line-height:19.55px;color:#333;font-weight:normal;letter-spacing:0px;white-space:nowrap;">Top</div>
<div style="position:absolute;left:1197px;top:376.33px;font-size:17px;line-height:19.55px;color:#333;font-weight:normal;letter-spacing:0px;white-space:nowrap;">Lowest</div>
<svg style="position:absolute;left:1116px;top:447px" width="23" height="17"><rect width="23" height="17" fill="#fff"/><rect x="0" y="0.00" width="23" height="1.31" fill="#d22f27"/><rect x="0" y="2.62" width="23" height="1.31" fill="#d22f27"/><rect x="0" y="5.23" width="23" height="1.31" fill="#d22f27"/><rect x="0" y="7.85" width="23" height="1.31" fill="#d22f27"/><rect x="0" y="10.46" width="23" height="1.31" fill="#d22f27"/><rect x="0" y="13.08" width="23" height="1.31" fill="#d22f27"/><rect x="0" y="15.69" width="23" height="1.31" fill="#d22f27"/><rect width="9.66" height="9.15" fill="#3c3b8e"/></svg>
<div style="position:absolute;left:1144px;top:445.83px;font-size:16.9px;line-height:19.43px;color:#333;font-weight:normal;letter-spacing:0px;white-space:nowrap;">United States</div>
<svg style="position:absolute;left:1254px;top:447.0px" width="17" height="17" viewBox="0 0 17 17"><path d="M6 3 H3.2 Q1.5 3 1.5 4.7 V13.3 Q1.5 15 3.2 15 H11.8 Q13.5 15 13.5 13.3 V10" fill="none" stroke="#8a8a8a" stroke-width="1.7" stroke-linecap="round"/><path d="M7 9.5 L14 2.5" stroke="#8a8a8a" stroke-width="1.7" stroke-linecap="round"/><path d="M10 1.3 H15.3 V6.6 Z" fill="#8a8a8a"/></svg>
<div style="position:absolute;left:1332.5px;top:437px;width:81.5px;height:38px;box-sizing:border-box;background:#f4f3ef;border-radius:5px;"></div>
<div style="position:absolute;right:92.5px;top:444.27px;font-size:20px;line-height:23.00px;color:#333;font-weight:normal;letter-spacing:0px;white-space:nowrap;text-align:right;">$38.8M</div>
<div style="position:absolute;left:1116px;top:484px;width:298px;height:1px;box-sizing:border-box;background:#edeae5;"></div>
<svg style="position:absolute;left:1116px;top:505px" width="23" height="17" viewBox="0 0 60 44" preserveAspectRatio="none"><rect width="60" height="44" fill="#1f2f8f"/><path d="M0 0 L60 44 M60 0 L0 44" stroke="#fff" stroke-width="9"/><path d="M0 0 L60 44 M60 0 L0 44" stroke="#d3262e" stroke-width="3.5"/><path d="M30 0 V44 M0 22 H60" stroke="#fff" stroke-width="13"/><path d="M30 0 V44 M0 22 H60" stroke="#d3262e" stroke-width="7.5"/></svg>
<div style="position:absolute;left:1144px;top:502.87px;font-size:17.4px;line-height:20.01px;color:#333;font-weight:normal;letter-spacing:0px;white-space:nowrap;">United Kingdom (UK)</div>
<svg style="position:absolute;left:1317px;top:504.5px" width="17" height="17" viewBox="0 0 17 17"><path d="M6 3 H3.2 Q1.5 3 1.5 4.7 V13.3 Q1.5 15 3.2 15 H11.8 Q13.5 15 13.5 13.3 V10" fill="none" stroke="#8a8a8a" stroke-width="1.7" stroke-linecap="round"/><path d="M7 9.5 L14 2.5" stroke="#8a8a8a" stroke-width="1.7" stroke-linecap="round"/><path d="M10 1.3 H15.3 V6.6 Z" fill="#8a8a8a"/></svg>
<div style="position:absolute;left:1346px;top:495px;width:68px;height:37px;box-sizing:border-box;background:#f4f3ef;border-radius:5px;"></div>
<div style="position:absolute;right:92.5px;top:501.77px;font-size:20px;line-height:23.00px;color:#333;font-weight:normal;letter-spacing:0px;white-space:nowrap;text-align:right;">$5.5M</div>
<div style="position:absolute;left:1116px;top:541px;width:298px;height:1px;box-sizing:border-box;background:#edeae5;"></div>
<svg style="position:absolute;left:1116px;top:562px" width="23" height="17" viewBox="0 0 48 36" preserveAspectRatio="none"><rect width="48" height="36" fill="#fff"/><rect width="12" height="36" fill="#e53a2e" rx="1"/><rect x="36" width="12" height="36" fill="#e53a2e" rx="1"/><path d="M24 9 L26 14 L29 13 L28 19 L31 18 L30 21 L26 22 L26 27 L22 27 L22 22 L18 21 L17 18 L20 19 L19 13 L22 14 Z" fill="#e53a2e"/></svg>
<div style="position:absolute;left:1144px;top:561.01px;font-size:16.7px;line-height:19.20px;color:#333;font-weight:normal;letter-spacing:0px;white-space:nowrap;">Canada</div>
<svg style="position:absolute;left:1210px;top:562.0px" width="17" height="17" viewBox="0 0 17 17"><path d="M6 3 H3.2 Q1.5 3 1.5 4.7 V13.3 Q1.5 15 3.2 15 H11.8 Q13.5 15 13.5 13.3 V10" fill="none" stroke="#8a8a8a" stroke-width="1.7" stroke-linecap="round"/><path d="M7 9.5 L14 2.5" stroke="#8a8a8a" stroke-width="1.7" stroke-linecap="round"/><path d="M10 1.3 H15.3 V6.6 Z" fill="#8a8a8a"/></svg>
<div style="position:absolute;left:1332.5px;top:552px;width:81.5px;height:38px;box-sizing:border-box;background:#f4f3ef;border-radius:5px;"></div>
<div style="position:absolute;right:92.5px;top:559.27px;font-size:20px;line-height:23.00px;color:#333;font-weight:normal;letter-spacing:0px;white-space:nowrap;text-align:right;">$3.12M</div>
<div style="position:absolute;left:70px;top:711px;width:1360px;height:289px;box-sizing:border-box;background:#fff;border:1px solid #edeae5;border-radius:5px;"></div>
<div style="position:absolute;left:189px;top:712px;width:1px;height:288px;box-sizing:border-box;background:#edeae5;"></div>
<div style="position:absolute;left:500px;top:712px;width:1px;height:288px;box-sizing:border-box;background:#edeae5;"></div>
<div style="position:absolute;left:757px;top:712px;width:1px;height:288px;box-sizing:border-box;background:#edeae5;"></div>
<div style="position:absolute;left:1061px;top:712px;width:1px;height:288px;box-sizing:border-box;background:#edeae5;"></div>
<div style="position:absolute;left:1205px;top:712px;width:1px;height:288px;box-sizing:border-box;background:#edeae5;"></div>
<div style="position:absolute;left:71px;top:755px;width:1358px;height:1px;box-sizing:border-box;background:#edeae5;"></div>
<div style="position:absolute;left:71px;top:805px;width:1358px;height:1px;box-sizing:border-box;background:#edeae5;"></div>
<div style="position:absolute;left:71px;top:856px;width:1358px;height:1px;box-sizing:border-box;background:#edeae5;"></div>
<div style="position:absolute;left:71px;top:906px;width:1358px;height:1px;box-sizing:border-box;background:#edeae5;"></div>
<div style="position:absolute;left:90px;top:722.38px;font-size:16.3px;line-height:18.75px;color:#8c8c8c;font-weight:normal;letter-spacing:0px;white-space:nowrap;">Following</div>
<svg style="position:absolute;left:199px;top:725px" width="10" height="7"><path d="M0 6 L5 0.5 L10 6 Z" fill="#8d93b8"/></svg>
<div style="position:absolute;left:214px;top:723.20px;font-size:16.5px;line-height:18.97px;color:#8c8c8c;font-weight:normal;letter-spacing:0px;white-space:nowrap;">Country</div>
<svg style="position:absolute;left:510px;top:732px" width="10" height="7"><path d="M0 0.5 L5 6 L10 0.5 Z" fill="#7b80a6"/></svg>
<div style="position:absolute;left:525px;top:724.02px;font-size:15.6px;line-height:17.94px;color:#8c8c8c;font-weight:normal;letter-spacing:0px;white-space:nowrap;">Total Revenue</div>
<svg style="position:absolute;left:629px;top:723px" width="18" height="18" viewBox="0 0 18 18"><circle cx="9" cy="9" r="7.6" fill="none" stroke="#8d8d8d" stroke-width="1.4"/><text x="9" y="13.2" font-family="Liberation Sans" font-size="11.5" text-anchor="middle" fill="#8d8d8d">?</text></svg>
<svg style="position:absolute;left:767px;top:726px" width="10" height="13"><path d="M0 5 L4.5 0 L9 5 Z" fill="#c5c8d8"/><path d="M0 7.5 L4.5 12.5 L9 7.5 Z" fill="#c5c8d8"/></svg>
<div style="position:absolute;left:787.5px;top:723.93px;font-size:15.7px;line-height:18.05px;color:#8c8c8c;font-weight:normal;letter-spacing:0px;white-space:nowrap;">Avg. Daily Revenue</div>
<svg style="position:absolute;left:929.5px;top:723px" width="18" height="18" viewBox="0 0 18 18"><circle cx="9" cy="9" r="7.6" fill="none" stroke="#8d8d8d" stroke-width="1.4"/><text x="9" y="13.2" font-family="Liberation Sans" font-size="11.5" text-anchor="middle" fill="#8d8d8d">?</text></svg>
<svg style="position:absolute;left:1072px;top:726px" width="10" height="13"><path d="M0 5 L4.5 0 L9 5 Z" fill="#c5c8d8"/><path d="M0 7.5 L4.5 12.5 L9 7.5 Z" fill="#c5c8d8"/></svg>
<div style="position:absolute;left:1093px;top:723.20px;font-size:16.5px;line-height:18.97px;color:#8c8c8c;font-weight:normal;letter-spacing:0px;white-space:nowrap;">Growth</div>
<svg style="position:absolute;left:1150px;top:723px" width="18" height="18" viewBox="0 0 18 18"><circle cx="9" cy="9" r="7.6" fill="none" stroke="#8d8d8d" stroke-width="1.4"/><text x="9" y="13.2" font-family="Liberation Sans" font-size="11.5" text-anchor="middle" fill="#8d8d8d">?</text></svg>
<svg style="position:absolute;left:214px;top:768px" width="17" height="17" viewBox="0 0 17 17"><circle cx="8.5" cy="8.5" r="6.6" fill="none" stroke="#333" stroke-width="1.3"/><ellipse cx="8.5" cy="8.5" rx="2.8" ry="6.6" fill="none" stroke="#333" stroke-width="1.2"/><path d="M2 8.5 H15" stroke="#333" stroke-width="1.2"/></svg>
<div style="position:absolute;left:239px;top:766.17px;font-size:17.4px;line-height:20.01px;color:#333;font-weight:normal;letter-spacing:0px;white-space:nowrap;">All Countries</div>
<div style="position:absolute;right:756.6px;top:765.89px;font-size:17.7px;line-height:20.35px;color:#333;font-weight:normal;letter-spacing:0px;white-space:nowrap;text-align:right;">$77.3M</div>
<div style="position:absolute;right:452px;top:765.89px;font-size:17.7px;line-height:20.35px;color:#333;font-weight:normal;letter-spacing:0px;white-space:nowrap;text-align:right;">$2.41M</div>
<svg style="position:absolute;left:1138px;top:771px" width="12" height="8"><path d="M0 7 L6 0.5 L12 7 Z" fill="#4ea866"/></svg>
<div style="position:absolute;right:308.5px;top:766.90px;font-size:16.6px;line-height:19.09px;color:#4ea866;font-weight:normal;letter-spacing:0px;white-space:nowrap;text-align:right;">1.3%</div>
<div style="position:absolute;left:99px;top:820.5px;width:38px;height:23.5px;box-sizing:border-box;background:#efeee9;border-radius:12px;"></div>
<div style="position:absolute;left:107px;top:822.72px;font-size:15.5px;line-height:17.82px;color:#333;font-weight:normal;letter-spacing:0px;white-space:nowrap;">1/2</div>
<svg style="position:absolute;left:150px;top:828px" width="16" height="11"><polyline points="2,2 8.0,9 14,2" fill="none" stroke="#555" stroke-width="1.3"/></svg>
<svg style="position:absolute;left:210px;top:818px" width="23" height="17"><rect width="23" height="17" fill="#fff"/><rect x="0" y="0.00" width="23" height="1.31" fill="#d22f27"/><rect x="0" y="2.62" width="23" height="1.31" fill="#d22f27"/><rect x="0" y="5.23" width="23" height="1.31" fill="#d22f27"/><rect x="0" y="7.85" width="23" height="1.31" fill="#d22f27"/><rect x="0" y="10.46" width="23" height="1.31" fill="#d22f27"/><rect x="0" y="13.08" width="23" height="1.31" fill="#d22f27"/><rect x="0" y="15.69" width="23" height="1.31" fill="#d22f27"/><rect width="9.66" height="9.15" fill="#3c3b8e"/></svg>
<div style="position:absolute;left:239px;top:816.43px;font-size:16.9px;line-height:19.43px;color:#333;font-weight:normal;letter-spacing:0px;white-space:nowrap;">United States</div>
<svg style="position:absolute;left:470px;top:819px" width="17" height="17" viewBox="0 0 17 17"><path d="M6 3 H3.2 Q1.5 3 1.5 4.7 V13.3 Q1.5 15 3.2 15 H11.8 Q13.5 15 13.5 13.3 V10" fill="none" stroke="#8a8a8a" stroke-width="1.7" stroke-linecap="round"/><path d="M7 9.5 L14 2.5" stroke="#8a8a8a" stroke-width="1.7" stroke-linecap="round"/><path d="M10 1.3 H15.3 V6.6 Z" fill="#8a8a8a"/></svg>
<div style="position:absolute;right:756.6px;top:815.69px;font-size:17.7px;line-height:20.35px;color:#333;font-weight:normal;letter-spacing:0px;white-space:nowrap;text-align:right;">$38.8M</div>
<div style="position:absolute;right:452px;top:815.69px;font-size:17.7px;line-height:20.35px;color:#333;font-weight:normal;letter-spacing:0px;white-space:nowrap;text-align:right;">$1.21M</div>
<svg style="position:absolute;left:1138px;top:821px" width="12" height="8"><path d="M0 7 L6 0.5 L12 7 Z" fill="#4ea866"/></svg>
<div style="position:absolute;right:308.5px;top:816.70px;font-size:16.6px;line-height:19.09px;color:#4ea866;font-weight:normal;letter-spacing:0px;white-space:nowrap;text-align:right;">5.9%</div>
<div style="position:absolute;left:99px;top:870.5px;width:38px;height:23.5px;box-sizing:border-box;background:#efeee9;border-radius:12px;"></div>
<div style="position:absolute;left:107px;top:872.72px;font-size:15.5px;line-height:17.82px;color:#333;font-weight:normal;letter-spacing:0px;white-space:nowrap;">0/1</div>
<svg style="position:absolute;left:150px;top:878px" width="16" height="11"><polyline points="2,2 8.0,9 14,2" fill="none" stroke="#555" stroke-width="1.3"/></svg>
<svg style="position:absolute;left:210px;top:868px" width="23" height="17" viewBox="0 0 60 44" preserveAspectRatio="none"><rect width="60" height="44" fill="#1f2f8f"/><path d="M0 0 L60 44 M60 0 L0 44" stroke="#fff" stroke-width="9"/><path d="M0 0 L60 44 M60 0 L0 44" stroke="#d3262e" stroke-width="3.5"/><path d="M30 0 V44 M0 22 H60" stroke="#fff" stroke-width="13"/><path d="M30 0 V44 M0 22 H60" stroke="#d3262e" stroke-width="7.5"/></svg>
<div style="position:absolute;left:239px;top:865.97px;font-size:17.4px;line-height:20.01px;color:#333;font-weight:normal;letter-spacing:0px;white-space:nowrap;">United Kingdom (UK)</div>
<svg style="position:absolute;left:470px;top:869px" width="17" height="17" viewBox="0 0 17 17"><path d="M6 3 H3.2 Q1.5 3 1.5 4.7 V13.3 Q1.5 15 3.2 15 H11.8 Q13.5 15 13.5 13.3 V10" fill="none" stroke="#8a8a8a" stroke-width="1.7" stroke-linecap="round"/><path d="M7 9.5 L14 2.5" stroke="#8a8a8a" stroke-width="1.7" stroke-linecap="round"/><path d="M10 1.3 H15.3 V6.6 Z" fill="#8a8a8a"/></svg>
<div style="position:absolute;right:756.6px;top:865.69px;font-size:17.7px;line-height:20.35px;color:#333;font-weight:normal;letter-spacing:0px;white-space:nowrap;text-align:right;">$5.5M</div>
<div style="position:absolute;right:452px;top:865.69px;font-size:17.7px;line-height:20.35px;color:#333;font-weight:normal;letter-spacing:0px;white-space:nowrap;text-align:right;">$172k</div>
<svg style="position:absolute;left:1133px;top:877px" width="12" height="8"><path d="M0 0.5 L6 7 L12 0.5 Z" fill="#e0574a"/></svg>
<div style="position:absolute;right:308.5px;top:866.43px;font-size:16.9px;line-height:19.43px;color:#e0574a;font-weight:normal;letter-spacing:0px;white-space:nowrap;text-align:right;">-1.6%</div>
<div style="position:absolute;left:99px;top:920.5px;width:38px;height:23.5px;box-sizing:border-box;background:#efeee9;border-radius:12px;"></div>
<div style="position:absolute;left:107px;top:922.72px;font-size:15.5px;line-height:17.82px;color:#333;font-weight:normal;letter-spacing:0px;white-space:nowrap;">0/2</div>
<svg style="position:absolute;left:150px;top:928px" width="16" height="11"><polyline points="2,2 8.0,9 14,2" fill="none" stroke="#555" stroke-width="1.3"/></svg>
<svg style="position:absolute;left:210px;top:918px" width="23" height="17" viewBox="0 0 48 36" preserveAspectRatio="none"><rect width="48" height="36" fill="#fff"/><rect width="12" height="36" fill="#e53a2e" rx="1"/><rect x="36" width="12" height="36" fill="#e53a2e" rx="1"/><path d="M24 9 L26 14 L29 13 L28 19 L31 18 L30 21 L26 22 L26 27 L22 27 L22 22 L18 21 L17 18 L20 19 L19 13 L22 14 Z" fill="#e53a2e"/></svg>
<div style="position:absolute;left:239px;top:916.80px;font-size:16.5px;line-height:18.97px;color:#333;font-weight:normal;letter-spacing:0px;white-space:nowrap;">Canada</div>
<svg style="position:absolute;left:470px;top:919px" width="17" height="17" viewBox="0 0 17 17"><path d="M6 3 H3.2 Q1.5 3 1.5 4.7 V13.3 Q1.5 15 3.2 15 H11.8 Q13.5 15 13.5 13.3 V10" fill="none" stroke="#8a8a8a" stroke-width="1.7" stroke-linecap="round"/><path d="M7 9.5 L14 2.5" stroke="#8a8a8a" stroke-width="1.7" stroke-linecap="round"/><path d="M10 1.3 H15.3 V6.6 Z" fill="#8a8a8a"/></svg>
<div style="position:absolute;right:756.6px;top:915.69px;font-size:17.7px;line-height:20.35px;color:#333;font-weight:normal;letter-spacing:0px;white-space:nowrap;text-align:right;">$3.12M</div>
<div style="position:absolute;right:452px;top:915.69px;font-size:17.7px;line-height:20.35px;color:#333;font-weight:normal;letter-spacing:0px;white-space:nowrap;text-align:right;">$97.6k</div>
<svg style="position:absolute;left:1133px;top:927px" width="12" height="8"><path d="M0 0.5 L6 7 L12 0.5 Z" fill="#e0574a"/></svg>
<div style="position:absolute;right:308.5px;top:916.43px;font-size:16.9px;line-height:19.43px;color:#e0574a;font-weight:normal;letter-spacing:0px;white-space:nowrap;text-align:right;">-1.2%</div>
</div></div></div></body></html>
